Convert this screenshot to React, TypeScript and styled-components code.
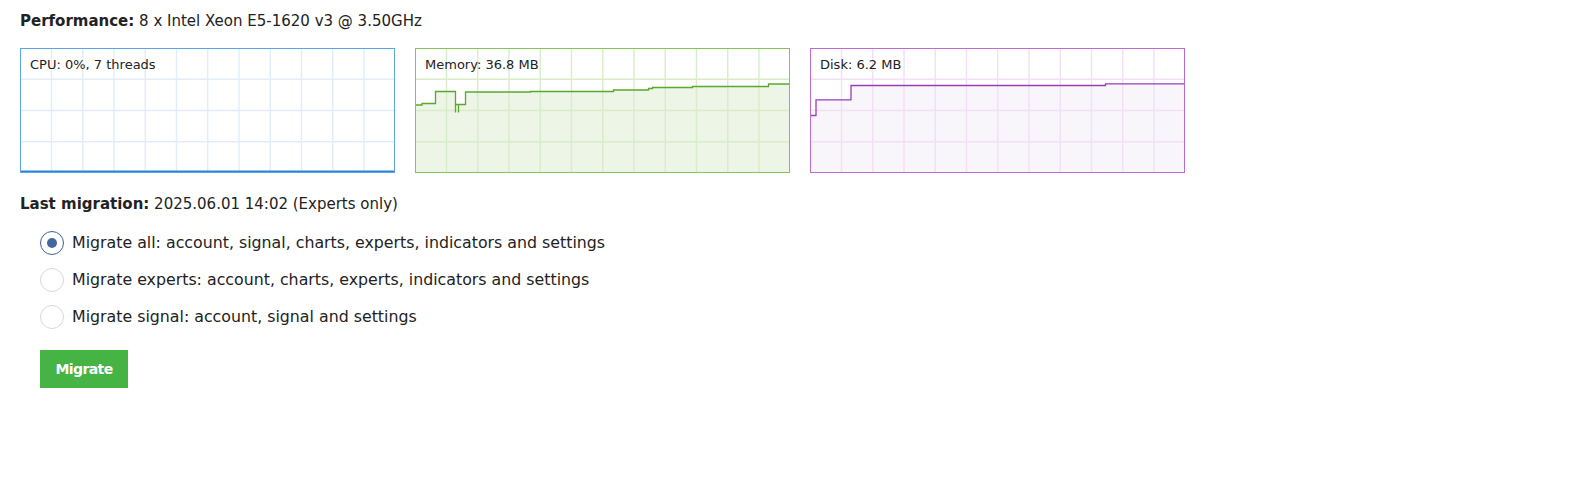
import React from "react";
import styled, { createGlobalStyle } from "styled-components";

const Global = createGlobalStyle`
  html, body { margin: 0; padding: 0; background: #fff; }
  body { font-family: "DejaVu Sans", Verdana, sans-serif; color: #222; }
`;

const Page = styled.div`
  padding: 11px 20px 0 20px;
  display: flex;
  flex-direction: column;
`;

const Heading = styled.div`
  font-size: 15px;
  line-height: 20px;
  height: 20px;
  b { font-weight: bold; }
`;

const ChartRow = styled.div`
  display: flex;
  gap: 20px;
  margin-top: 17px;
`;

const ChartBox = styled.div<{ $border: string }>`
  position: relative;
  width: 375px;
  height: 125px;
  box-sizing: border-box;
  border: 1px solid ${(p) => p.$border};
  background: #fff;
  svg { display: block; }
`;

const ChartLabel = styled.span`
  position: absolute;
  left: 9px;
  top: 7px;
  font-size: 13px;
  line-height: 18px;
  color: #222;
`;

const Section = styled.div`
  margin-top: 21px;
`;

const RadioList = styled.div`
  display: flex;
  flex-direction: column;
  gap: 13px;
  margin-top: 17px;
  padding-left: 20px;
`;

const RadioRow = styled.label`
  display: flex;
  align-items: center;
  gap: 8px;
  font-size: 15.8px;
  line-height: 24px;
  cursor: pointer;
`;

const RadioCircle = styled.span<{ $checked: boolean }>`
  width: 24px;
  height: 24px;
  flex: none;
  box-sizing: border-box;
  border-radius: 50%;
  border: 1px solid ${(p) => (p.$checked ? "#3f5f9c" : "#d8d8d8")};
  display: flex;
  align-items: center;
  justify-content: center;
  background: #fff;
  &::after {
    content: "";
    width: 10px;
    height: 10px;
    border-radius: 50%;
    background: ${(p) => (p.$checked ? "#44679f" : "transparent")};
  }
`;

const Button = styled.button`
  margin-top: 21px;
  margin-left: 20px;
  align-self: flex-start;
  width: 88px;
  height: 38px;
  padding: 0;
  border: none;
  background: #45b445;
  color: #fff;
  font-family: inherit;
  font-weight: bold;
  font-size: 14px;
  letter-spacing: -0.6px;
  cursor: pointer;
`;

type ChartProps = {
  label: string;
  border: string;
  grid: string;
  line?: string;
  fill?: string;
  path?: string;
  bottomLine?: string;
};

const W = 373;
const H = 123;

function Chart({ label, border, grid, line, fill, path, bottomLine }: ChartProps) {
  const vs = Array.from({ length: 11 }, (_, i) => 31.25 * (i + 1) - 1 + 0.25);
  const hs = [30.25, 61.5, 92.75];
  return (
    <ChartBox $border={border}>
      <svg width={W} height={H} viewBox={`0 0 ${W} ${H}`}>
        {path && fill && <path d={`${path} V ${H} H 0 Z`} fill={fill} />}
        {vs.map((x) => (
          <line key={"v" + x} x1={x} x2={x} y1={0} y2={H} stroke={grid} strokeWidth={1.4} />
        ))}
        {hs.map((y) => (
          <line key={"h" + y} x1={0} x2={W} y1={y} y2={y} stroke={grid} strokeWidth={1.4} />
        ))}
        {path && line && <path d={path} fill="none" stroke={line} strokeWidth={1.3} />}
        {bottomLine && <line x1={0} x2={W} y1={H - 0.5} y2={H - 0.5} stroke={bottomLine} strokeWidth={2} />}
      </svg>
      <ChartLabel>{label}</ChartLabel>
    </ChartBox>
  );
}

const memPath =
  "M 0 56 H 6 V 54.5 H 19.5 V 42.5 H 39.5 V 63.5 V 55.5 H 42.5 V 63.5 V 55.5 H 49.5 V 43 H 114.5 V 42.5 H 197.5 V 41 H 232.5 V 39.5 H 236.5 V 38.5 H 276.5 V 37.5 H 352.5 V 35 H 373";
const diskPath = "M 0 66.5 H 5 V 50.8 H 40 V 36.5 H 294.5 V 34.8 H 373";

const options = [
  "Migrate all: account, signal, charts, experts, indicators and settings",
  "Migrate experts: account, charts, experts, indicators and settings",
  "Migrate signal: account, signal and settings",
];

export default function App() {
  const [sel, setSel] = React.useState(0);
  return (
    <>
      <Global />
      <Page>
        <Heading>
          <b>Performance:</b> 8 x Intel Xeon E5-1620 v3 @ 3.50GHz
        </Heading>
        <ChartRow>
          <Chart label="CPU: 0%, 7 threads" border="#5aa5ea" grid="#e1edf8" bottomLine="#2f82d6" />
          <Chart
            label="Memory: 36.8 MB"
            border="#84c45a"
            grid="#d9ecca"
            line="#5aa82c"
            fill="#ecf5e6"
            path={memPath}
          />
          <Chart
            label="Disk: 6.2 MB"
            border="#bb6ad6"
            grid="#f1e0f6"
            line="#9a3db8"
            fill="#f9f6fb"
            path={diskPath}
          />
        </ChartRow>
        <Section>
          <Heading>
            <b>Last migration:</b> 2025.06.01 14:02 (Experts only)
          </Heading>
        </Section>
        <RadioList>
          {options.map((o, i) => (
            <RadioRow key={o} onClick={() => setSel(i)}>
              <RadioCircle $checked={sel === i} />
              {o}
            </RadioRow>
          ))}
        </RadioList>
        <Button>Migrate</Button>
      </Page>
    </>
  );
}
